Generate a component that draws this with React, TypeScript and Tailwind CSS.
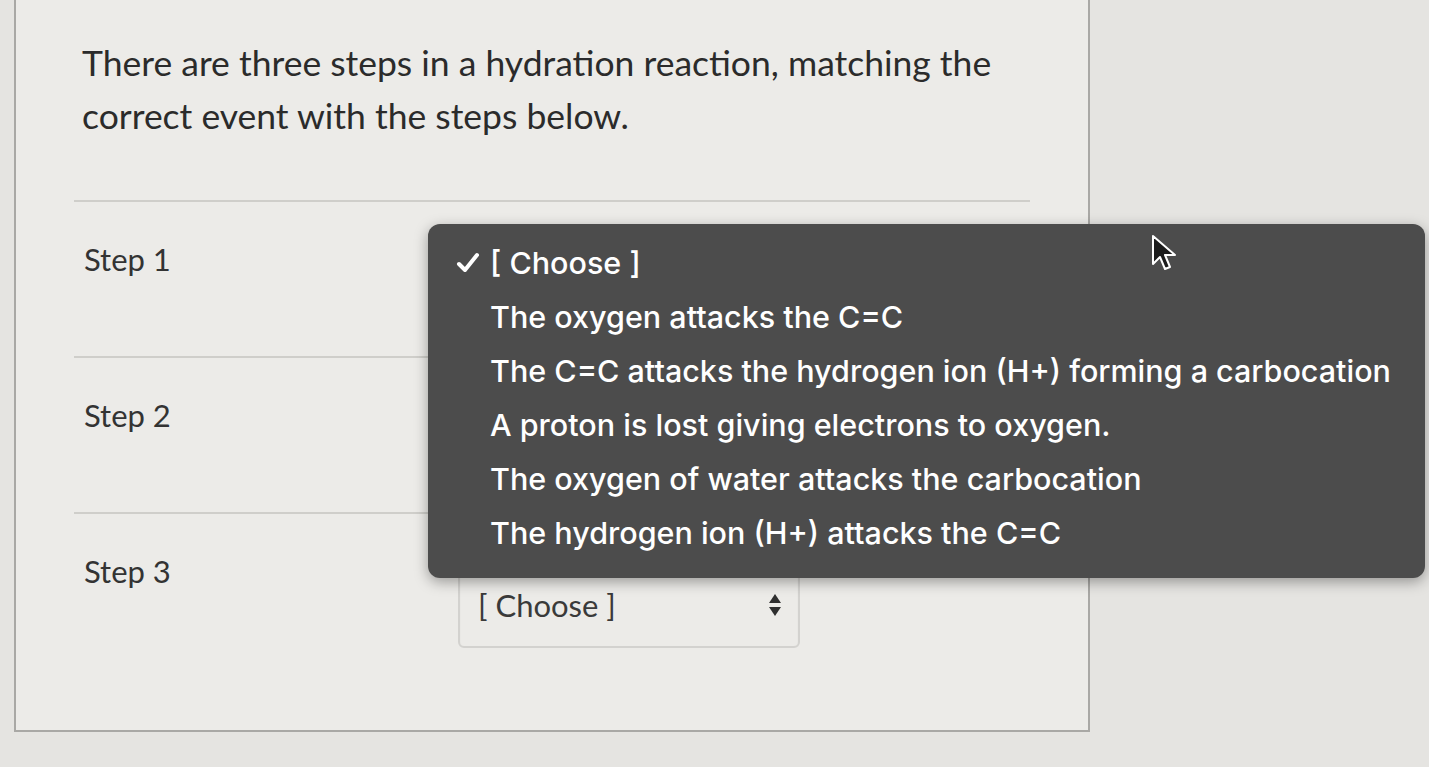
import { useState } from "react";

const options = [
  "The oxygen attacks the C=C",
  "The C=C attacks the hydrogen ion (H+) forming a carbocation",
  "A proton is lost giving electrons to oxygen.",
  "The oxygen of water attacks the carbocation",
  "The hydrogen ion (H+) attacks the C=C",
];

function SelectBox({ hidden }: { hidden?: boolean }) {
  return (
    <div
      className={`flex h-[86px] w-[342px] items-center justify-between rounded-md border-2 border-[#d3d2cf] bg-[#ecebe8] pl-[18px] pr-[16px] shadow-[inset_0_1px_2px_rgba(0,0,0,0.06)] ${
        hidden ? "invisible" : ""
      }`}
    >
      <span className="text-[31px] text-[#3a3a3a]">[ Choose ]</span>
      <svg width="14" height="26" viewBox="0 0 14 26">
        <path d="M7 2 L13 11 L1 11 Z" fill="#2f2f2f" />
        <path d="M1 15 L13 15 L7 24 Z" fill="#2f2f2f" />
      </svg>
    </div>
  );
}

function Cursor() {
  return (
    <svg width="30" height="40" viewBox="0 0 30 40">
      <path
        d="M3 2 L3 30 L10 23 L15 35 L20 33 L15 21 L25 21 Z"
        fill="#1c1c1c"
        stroke="#ffffff"
        strokeWidth="2"
        strokeLinejoin="round"
      />
    </svg>
  );
}

export default function App() {
  const [selected] = useState<string | null>(null);

  return (
    <div
      className="relative h-[767px] w-[1429px] overflow-hidden bg-[#e5e4e1]"
      style={{ fontFamily: "Lato, 'Open Sans', sans-serif" }}
    >
      <div className="ml-[14px] h-[732px] w-[1076px] border-x-2 border-b-2 border-[#a9a8a5] bg-[#ecebe8]">
        <div className="px-[58px] pt-[36px]">
          <p className="pl-[8px] pr-[20px] text-[35.5px] leading-[53px] text-[#2b2b2b]">
            There are three steps in a hydration reaction, matching the
            correct event with the steps below.
          </p>
          <div className="mt-[58px] border-t-2 border-[#cfceca]" />
          {["Step 1", "Step 2", "Step 3"].map((step, i) => (
            <div
              key={step}
              className={`flex h-[156px] items-start ${
                i < 2 ? "border-b-2 border-[#cfceca]" : ""
              }`}
            >
              <div className="w-[384px] pl-[10px] pt-[37px] text-[31px] leading-[40px] text-[#333333]">
                {step}
              </div>
              <div className="pt-[48px]">
                <SelectBox hidden={i < 2} />
              </div>
            </div>
          ))}
        </div>
      </div>

      <div
        className="absolute left-[428px] top-[224px] w-[997px] rounded-xl bg-[#4c4c4c] pb-[18px] pt-[12px] text-white shadow-[0_4px_14px_rgba(0,0,0,0.35)]"
        style={{ fontFamily: "Inter, 'Noto Sans', sans-serif" }}
      >
        <div className="flex h-[54px] items-center text-[30.5px] font-medium">
          <span className="flex w-[62px] justify-end pr-[10px]">
            <svg width="24" height="22" viewBox="0 0 24 22">
              <path
                d="M3 12 L9 18 L21 3"
                fill="none"
                stroke="#ffffff"
                strokeWidth="4"
                strokeLinecap="round"
                strokeLinejoin="round"
              />
            </svg>
          </span>
          <span>{selected ?? "[ Choose ]"}</span>
        </div>
        {options.map((o) => (
          <div
            key={o}
            className="flex h-[54px] items-center pl-[62px] text-[30.5px] font-medium"
          >
            {o}
          </div>
        ))}
      </div>

      <div className="absolute left-[1150px] top-[234px]">
        <Cursor />
      </div>
    </div>
  );
}
